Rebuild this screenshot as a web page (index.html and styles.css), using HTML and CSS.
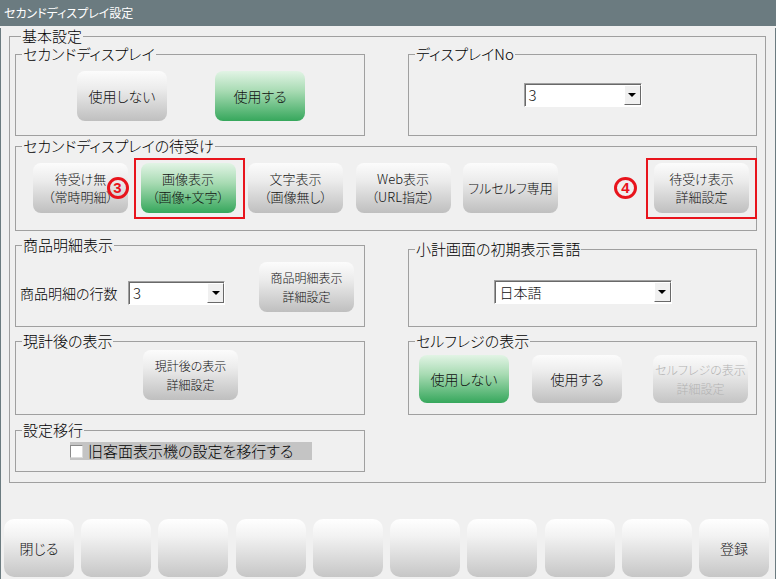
FILE: index.html
```html
<!DOCTYPE html>
<html lang="ja">
<head>
<meta charset="utf-8">
<title>セカンドディスプレイ設定</title>
<link rel="stylesheet" href="styles.css">
</head>
<body>
<div class="titlebar">セカンドディスプレイ設定</div>
<div class="client">
  <fieldset class="group outer">
    <legend class="outer-legend">基本設定</legend>

    <div class="row r1">
      <fieldset class="group col-left h90">
        <legend>セカンドディスプレイ</legend>
        <div class="content c-display">
          <button class="btn gray w90 h50 big">使用しない</button>
          <button class="btn green w90 h50 big">使用する</button>
        </div>
      </fieldset>
      <fieldset class="group col-right h90">
        <legend>ディスプレイNo</legend>
        <div class="content c-center c-no">
          <div class="select w118"><span class="sel-text">3</span><span class="sel-arrow"><span class="tri"></span></span></div>
        </div>
      </fieldset>
    </div>

    <div class="row r2">
      <fieldset class="group col-full h93">
        <legend>セカンドディスプレイの待受け</legend>
        <div class="content c-standby">
          <button class="btn gray w95 h50">待受け無<br>（常時明細）</button>
          <button class="btn green w95 h50 hl">画像表示<br>（画像+文字）<span class="frame f3"></span><span class="num n3">3</span></button>
          <button class="btn gray w95 h50">文字表示<br>（画像無し）</button>
          <button class="btn gray w95 h50">Web表示<br>（URL指定）</button>
          <button class="btn gray w95 h50">フルセルフ専用</button>
          <button class="btn gray w95 h50 hl push">待受け表示<br>詳細設定<span class="frame f4"></span><span class="num n4">4</span></button>
        </div>
      </fieldset>
    </div>

    <div class="row r3">
      <fieldset class="group col-left h90">
        <legend>商品明細表示</legend>
        <div class="content c-items">
          <span class="field-label">商品明細の行数</span>
          <div class="select w97 items-select"><span class="sel-text">3</span><span class="sel-arrow"><span class="tri"></span></span></div>
          <button class="btn gray w95 h50 small items-btn">商品明細表示<br>詳細設定</button>
        </div>
      </fieldset>
      <fieldset class="group col-right h86 r3-right">
        <legend>小計画面の初期表示言語</legend>
        <div class="content c-center c-lang">
          <div class="select w178"><span class="sel-text lang">日本語</span><span class="sel-arrow"><span class="tri"></span></span></div>
        </div>
      </fieldset>
    </div>

    <div class="row r4">
      <fieldset class="group col-left h82">
        <legend>現計後の表示</legend>
        <div class="content c-after">
          <button class="btn gray w95 h50 small">現計後の表示<br>詳細設定</button>
        </div>
      </fieldset>
      <fieldset class="group col-right h82">
        <legend>セルフレジの表示</legend>
        <div class="content c-self">
          <button class="btn green w90 h48 big">使用しない</button>
          <button class="btn gray w90 h48 big self-use">使用する</button>
          <button class="btn disabled w95 h48 small self-detail">セルフレジの表示<br>詳細設定</button>
        </div>
      </fieldset>
    </div>

    <div class="row r5">
      <fieldset class="group col-left h50">
        <legend>設定移行</legend>
        <div class="content c-migrate">
          <label class="migrate"><span class="checkbox"></span><span class="migrate-text">旧客面表示機の設定を移行する</span></label>
        </div>
      </fieldset>
    </div>
  </fieldset>

  <div class="footer">
    <button class="fbtn">閉じる</button>
    <button class="fbtn"></button>
    <button class="fbtn"></button>
    <button class="fbtn"></button>
    <button class="fbtn"></button>
    <button class="fbtn"></button>
    <button class="fbtn"></button>
    <button class="fbtn"></button>
    <button class="fbtn"></button>
    <button class="fbtn">登録</button>
  </div>
</div>
</body>
</html>
```

FILE: styles.css
```css
* { box-sizing: border-box; }
html, body { margin: 0; padding: 0; }
body {
  width: 776px;
  height: 579px;
  overflow: hidden;
  background: #f0f0f0;
  font-family: "Noto Sans CJK JP", "Noto Sans", sans-serif;
  font-feature-settings: "palt" 1;
  font-weight: 300;
  color: #000;
}

.titlebar {
  height: 26px;
  background: #6b7b80;
  color: #fff;
  font-size: 12px;
  font-weight: 400;
  line-height: 25px;
  padding-left: 4px;
}

.client {
  height: 553px;
  border: 1px solid #6b7b80;
  border-top: 0;
}

/* group boxes */
.group {
  margin: 0;
  padding: 0;
  min-width: 0;
  border: 1px solid #a0a0a0;
}
.group > legend {
  margin-left: 6px;
  padding: 0 1px;
  font-size: 15px;
  line-height: 16px;
  height: 16px;
  color: #000;
  white-space: nowrap;
}
.outer {
  margin: 2px 9px 0 8px;
  padding: 2px 8px 10px 5px;
}
.outer > .outer-legend { line-height: 15px; height: 16px; }

.row { display: flex; align-items: flex-start; gap: 43px; }
.r2 { margin-top: 2px; }
.r3 { margin-top: 6px; }
.r4 { margin-top: 6px; }
.r5 { margin-top: 7px; }

.col-left { width: 350px; flex: none; }
.col-right { width: 349px; flex: none; }
.col-full { width: 742px; flex: none; }
.h90 { height: 90px; }
.h93 { height: 93px; }
.h86 { height: 86px; }
.h82 { height: 82px; }
.h50 { height: 50px; }
.r3-right { margin-top: 4px; }

.content { display: flex; align-items: flex-start; }
.c-center { justify-content: center; }

.c-display { padding: 9px 0 0 61px; gap: 48px; }
.c-no { padding-top: 21px; }
.c-standby { padding: 9px 7px 0 17px; gap: 12.5px; }
.c-standby .push { margin-left: auto; }
.c-items { padding: 0 0 0 4px; }
.c-lang { padding-top: 23px; }
.c-after { padding: 1px 0 0 127px; }
.c-self { padding: 6px 0 0 10px; }
.c-migrate { padding: 4px 0 0 54px; }

/* buttons */
.btn {
  position: relative;
  flex: none;
  display: flex;
  align-items: center;
  justify-content: center;
  border: 0;
  margin: 0;
  padding: 0;
  border-radius: 8px;
  font-family: inherit;
  font-feature-settings: "palt" 1;
  font-weight: 300;
  font-size: 13px;
  line-height: 18px;
  color: #111;
  text-align: center;
}
.btn.big { font-size: 14px; }
.btn.small { font-size: 12px; line-height: 19px; }
.gray { background: linear-gradient(#fcfcfc 0%, #ececec 35%, #bfbfbf 100%); }
.green { background: linear-gradient(#e2f4e5 0%, #a8dbb3 40%, #36a75c 100%); }
.disabled {
  background: linear-gradient(#fbfbfb 0%, #ececec 35%, #c4c4c4 100%);
  color: #b3b3b3;
}
.w90 { width: 90px; }
.w95 { width: 95px; }
.h48 { height: 48px; }

.self-use { margin-left: 23px; }
.self-detail { margin-left: 31px; }
.items-btn { margin: 9px 0 0 34px; }

/* red callouts */
.frame {
  position: absolute;
  border: 2px solid #e8141c;
  pointer-events: none;
}
.f3 { left: -7px; top: -5px; right: -9px; bottom: -6px; }
.f4 { left: -8px; top: -5px; right: -8px; bottom: -6px; }
.num {
  position: absolute;
  top: 14px;
  width: 22px;
  height: 22px;
  border: 3px solid #e8141c;
  border-radius: 50%;
  color: #e8141c;
  font-family: "Liberation Sans", sans-serif;
  font-size: 15px;
  font-weight: 700;
  line-height: 16px;
  text-align: center;
}
.n3 { left: -34px; }
.n4 { left: -40px; width: 23px; height: 22px; }

/* combo boxes */
.select {
  display: flex;
  height: 24px;
  background: #fff;
  border: 1px solid;
  border-color: #a0a0a0 #ffffff #ffffff #a0a0a0;
  box-shadow: inset 1px 1px 0 #696969;
  flex: none;
}
.w118 { width: 118px; }
.w97 { width: 97px; }
.w178 { width: 178px; }
.sel-text {
  flex: 1;
  padding-left: 4px;
  font-size: 15px;
  line-height: 22px;
  color: #111;
}
.sel-text.lang { font-size: 14px; padding-left: 5px; }
.sel-arrow {
  width: 17px;
  margin: 1px 0 1px 0;
  background: #f0f0f0;
  border: 1px solid;
  border-color: #ffffff #696969 #696969 #ffffff;
  display: flex;
  align-items: center;
  justify-content: center;
}
.tri {
  width: 0;
  height: 0;
  border-left: 4px solid transparent;
  border-right: 4px solid transparent;
  border-top: 4px solid #000;
}

.field-label {
  margin-top: 28px;
  font-size: 14px;
  line-height: 24px;
  width: 108px;
  flex: none;
  white-space: nowrap;
}
.items-select { margin-top: 28px; }

/* checkbox row */
.migrate {
  display: flex;
  align-items: center;
  width: 242px;
  height: 18px;
  background: #c4c4c4;
}
.checkbox {
  width: 13px;
  height: 13px;
  background: #fff;
  border: 1px solid;
  border-color: #8a8a8a #dcdcdc #dcdcdc #8a8a8a;
  flex: none;
}
.migrate-text {
  margin-left: 5px;
  font-size: 15px;
  line-height: 18px;
  white-space: nowrap;
}

/* footer buttons */
.footer {
  display: flex;
  justify-content: space-between;
  margin-top: 36px;
  padding: 0 6px 0 3px;
}
.fbtn {
  width: 70px;
  height: 58px;
  border: 0;
  padding: 0;
  border-radius: 10px;
  background: linear-gradient(#ffffff 0%, #f2f2f2 30%, #c6c6c6 100%);
  font-family: inherit;
  font-feature-settings: "palt" 1;
  font-weight: 300;
  font-size: 14px;
  color: #111;
}
```
